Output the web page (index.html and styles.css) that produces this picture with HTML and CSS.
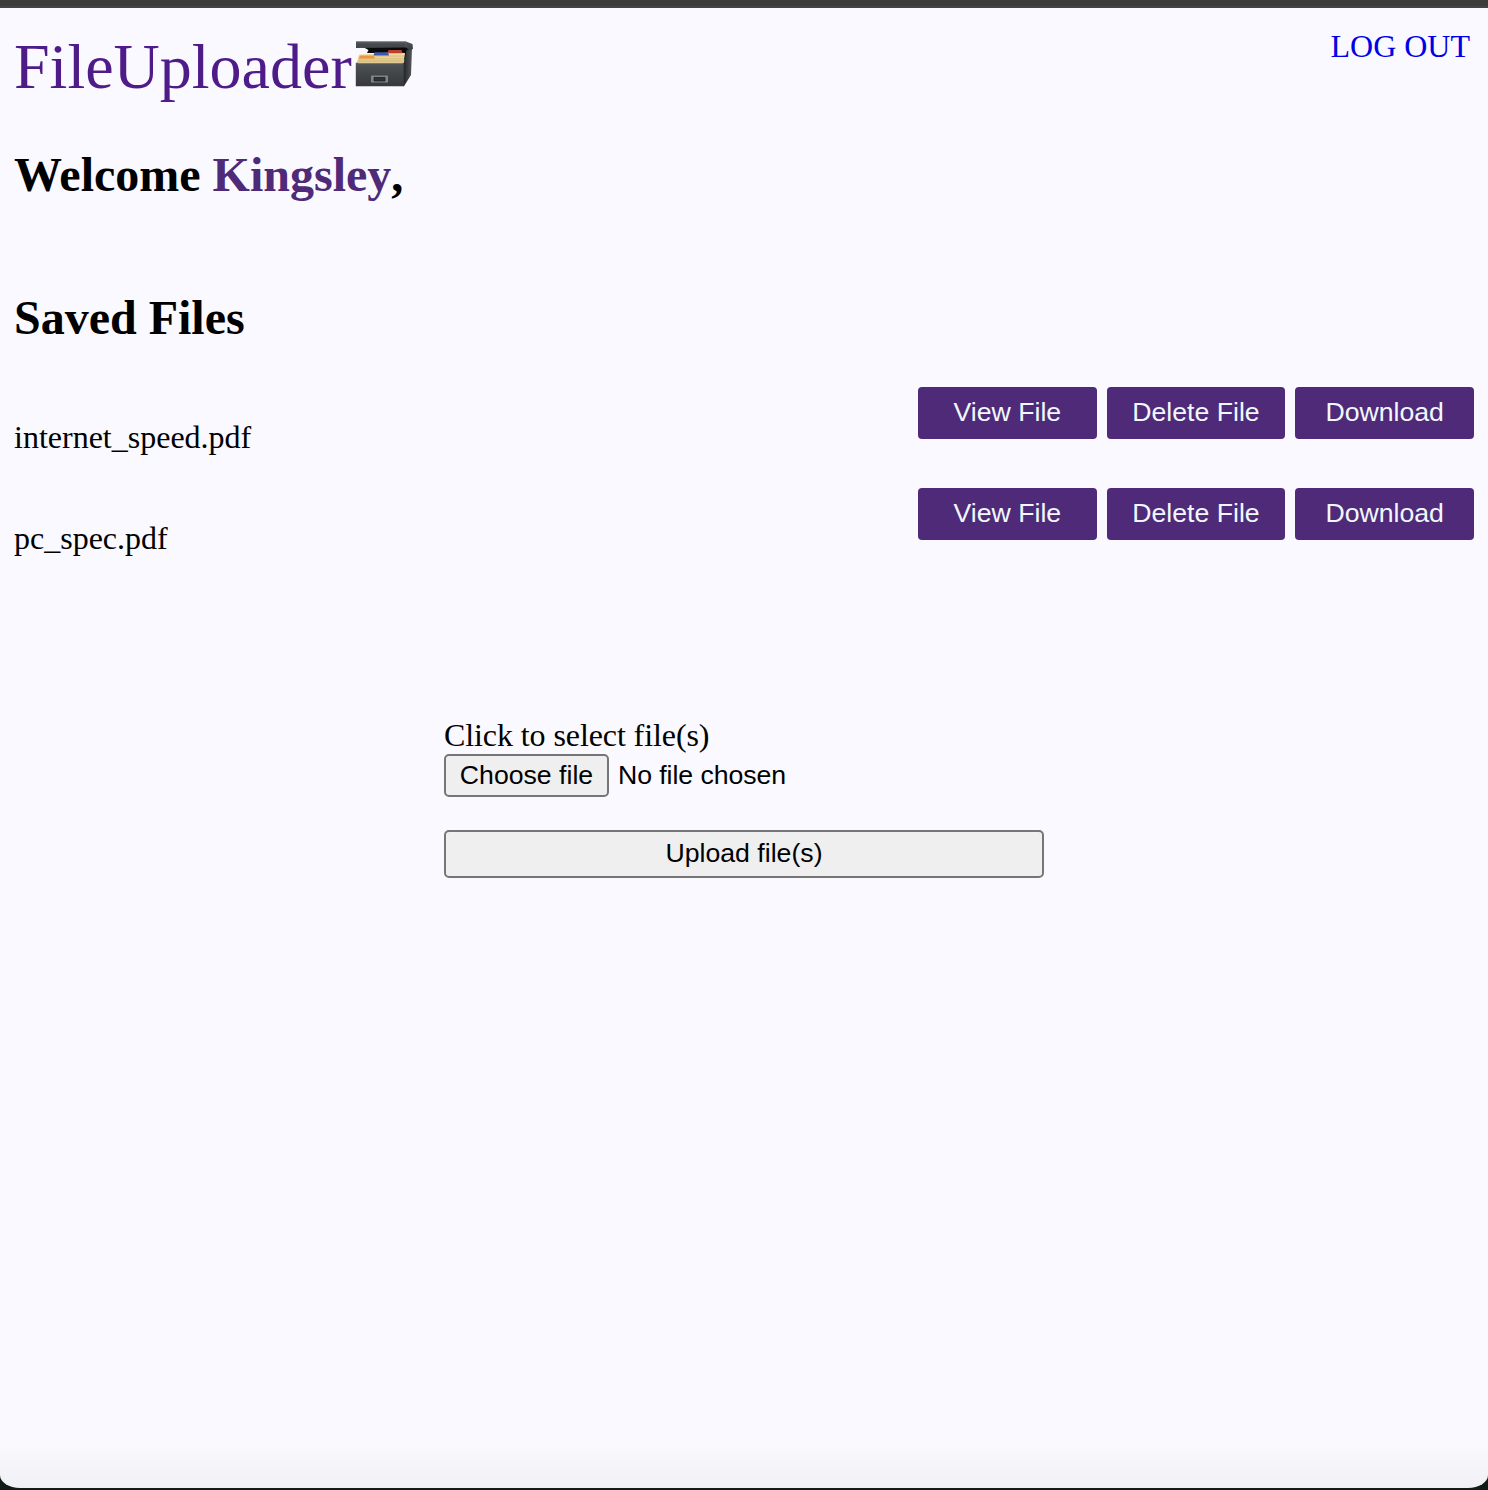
FILE: index.html
```html
<!DOCTYPE html>
<html lang="en">
<head>
<meta charset="utf-8">
<title>FileUploader</title>
<link rel="stylesheet" href="styles.css">
</head>
<body>
<div class="window">
  <header class="header">
    <a class="brand">FileUploader<svg class="brand-icon" viewBox="0 0 59 47" aria-hidden="true">
      <defs>
        <linearGradient id="front" x1="0" y1="0" x2="0" y2="1"><stop offset="0" stop-color="#4f5356"/><stop offset="1" stop-color="#36383b"/></linearGradient>
        <linearGradient id="lid" x1="0" y1="0" x2="0" y2="1"><stop offset="0" stop-color="#585c5f"/><stop offset=".3" stop-color="#484c4f"/><stop offset="1" stop-color="#3e4144"/></linearGradient>
        <linearGradient id="side" x1="0" y1="0" x2="1" y2="0"><stop offset="0" stop-color="#242629"/><stop offset="1" stop-color="#55585b"/></linearGradient>
        <linearGradient id="paper" x1="0" y1="0" x2="0" y2="1"><stop offset="0" stop-color="#f5dfa5"/><stop offset="1" stop-color="#dfc68a"/></linearGradient>
      </defs>
      <path d="M8 6H56V20H50L46 12H12L13.500 9Z" fill="#090a0b"/>
      <path d="M4 13.500L19 12.800L34 11.500L50 12L48.500 23H1.500Z" fill="url(#paper)"/>
      <path d="M19 15H49M4 17.800H48.500M3 20H48" stroke="#c5a96e" stroke-width=".6"/>
      <path d="M19.500 11.300H33L34 14.500H18.500Z" fill="#3b59aa"/>
      <path d="M33.500 9H46.500L47.500 12.300H32.500Z" fill="#bf3f2f"/>
      <path d="M5 14.500H18.500L20 17.500H3.800Z" fill="#ec963e"/>
      <path d="M.8 22L2 21.500L4 22.500H46L49 22V45.300H.8Z" fill="url(#front)"/>
      <path d="M1 22.700H48" stroke="#65696b" stroke-width=".8"/>
      <path d="M48.700 22L51.500 9L57 7.500L56 34L49 45.300H48.700Z" fill="url(#side)"/>
      <path d="M1 .5H51L57.500 3L58 8L55 9L50.500 6.500L1 7Z" fill="url(#lid)"/>
      <path d="M1 .8H51V6" fill="none" stroke="#666a6c" stroke-width=".6"/>
      <path d="M16 34.500H33V41.500H16Z" fill="#808386"/>
      <path d="M19 36.500H30V40H19Z" fill="#303336" stroke="#151719" stroke-width=".7"/>
    </svg></a>
    <a class="logout">LOG OUT</a>
  </header>
  <h2 class="welcome">Welcome <span class="username">Kingsley</span>,</h2>
  <h2 class="section-title">Saved Files</h2>
  <section class="files">
    <div class="file-row">
      <p class="file-name">internet_speed.pdf</p>
      <div class="actions"><button class="action">View File</button><button class="action">Delete File</button><button class="action">Download</button></div>
    </div>
    <div class="file-row">
      <p class="file-name">pc_spec.pdf</p>
      <div class="actions"><button class="action">View File</button><button class="action">Delete File</button><button class="action">Download</button></div>
    </div>
  </section>
  <form class="upload">
    <label class="upload-label">Click to select file(s)</label>
    <div class="picker"><button type="button" class="control choose">Choose file</button><span>No file chosen</span></div>
    <button type="button" class="control submit">Upload file(s)</button>
  </form>
</div>
</body>
</html>
```
FILE: styles.css
```css
* { box-sizing: border-box; }

body {
  margin: 0;
  height: 1490px;
  background: linear-gradient(#3c3c3c 0 6px, #444 6px 8px, #101c16 8px);
  font: 32px/36px "Liberation Serif", "Times New Roman", serif;
  color: #000;
  padding-top: 8px;
}

.window {
  height: 1480px;
  padding: 20px 14px 0;
  background: linear-gradient(#f9f9ff 0 1415px, #f8f8fd 1440px, #f0f0f5 1480px);
  border-radius: 0 0 20px 20px / 0 0 13px 13px;
}

.header {
  display: flex;
  justify-content: space-between;
  align-items: flex-start;
  height: 120px;
}

.brand {
  display: flex;
  padding-top: 3px;
  font-size: 64px;
  line-height: 72px;
  color: #4e1b88;
}

.brand-icon {
  width: 59px;
  height: 47px;
  margin: 10px 0 0 3px;
}

.logout {
  padding-right: 4px;
  color: #0000e6;
}

.welcome,
.section-title {
  margin: 0;
  font-size: 48px;
  line-height: 54px;
}

.username {
  display: inline-block;
  color: #4f2a78;
}

.section-title { margin-top: 89px; }

.files {
  display: grid;
  gap: 34px;
  margin-top: 42px;
}

.file-row {
  display: flex;
  justify-content: space-between;
  align-items: flex-start;
  height: 67px;
}

.file-name { margin: 32px 0 0; }

.actions {
  display: grid;
  grid-template-columns: repeat(3, 1fr);
  gap: 10px;
  width: 556px;
}

button,
.picker {
  font: 26.667px/30px "Liberation Sans", Arial, sans-serif;
}

.action {
  padding: 10px 0 12px;
  border: 0;
  border-radius: 4px;
  background: #4f2a78;
  color: #f0f8ff;
}

.upload {
  display: flex;
  flex-direction: column;
  width: 600px;
  margin: 162px auto 0;
}

.upload-label {
  height: 37px;
  letter-spacing: -0.09px;
}

.picker {
  display: flex;
  align-items: flex-start;
  gap: 9px;
}

.picker span {
  padding-top: 6px;
  letter-spacing: -0.07px;
}

.control {
  border: 2px solid #767676;
  border-radius: 5px;
  background: #efefef;
  color: #000;
}

.choose {
  width: 165px;
  padding: 4px 0 5px;
  white-space: nowrap;
}

.submit {
  margin-top: 33px;
  padding: 6px 0 8px;
}
```
